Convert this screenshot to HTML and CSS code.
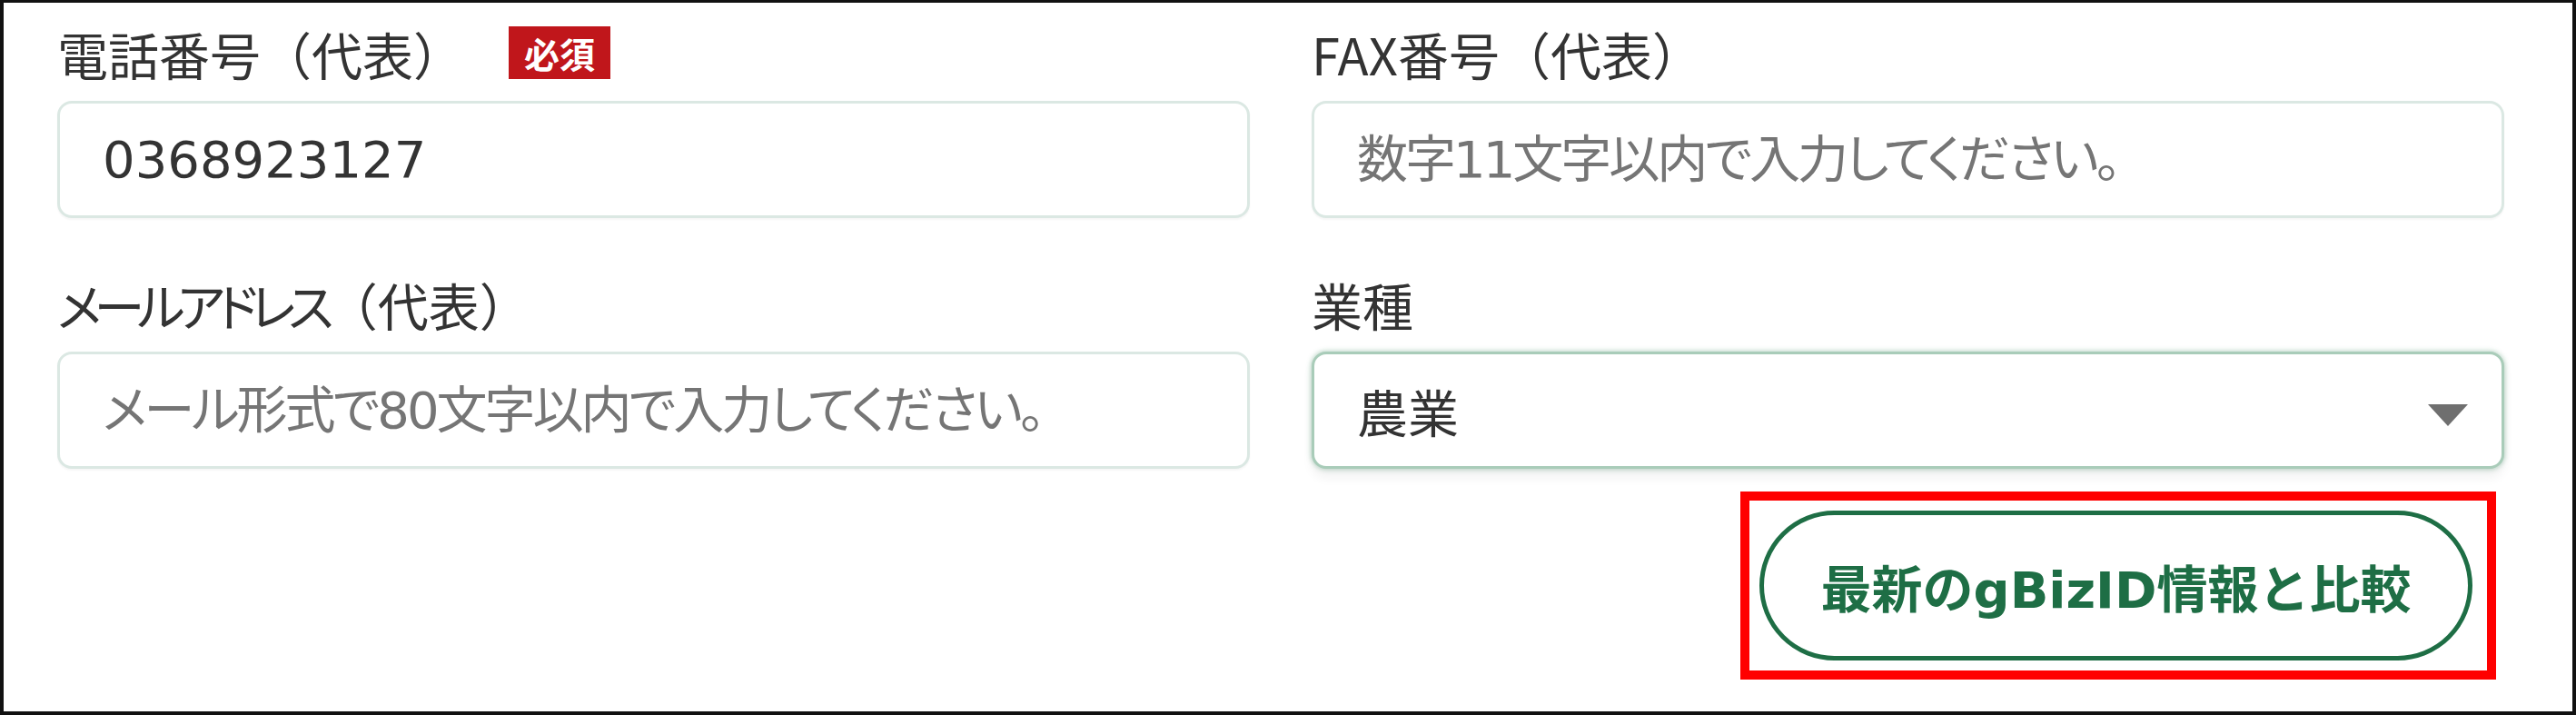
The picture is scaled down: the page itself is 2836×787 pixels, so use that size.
FILE: index.html
```html
<!DOCTYPE html>
<html lang="ja">
<head>
<meta charset="utf-8">
<title>企業情報</title>
<link rel="stylesheet" href="styles.css">
</head>
<body>
<div class="frame">
  <div class="grid">
    <div class="field">
      <div class="label-row">
        <label class="label" for="tel">電話番号（代表）</label>
        <span class="badge">必須</span>
      </div>
      <input class="input" id="tel" type="text" value="0368923127">
    </div>
    <div class="field">
      <div class="label-row">
        <label class="label" for="fax">FAX番号（代表）</label>
      </div>
      <input class="input" id="fax" type="text" placeholder="数字11文字以内で入力してください。">
    </div>
    <div class="field">
      <div class="label-row">
        <label class="label" for="mail"><span class="kana">メールアドレス</span>（代表）</label>
      </div>
      <input class="input" id="mail" type="text" placeholder="メール形式で80文字以内で入力してください。">
    </div>
    <div class="field">
      <div class="label-row">
        <label class="label" for="industry">業種</label>
      </div>
      <div class="select-wrap">
        <select class="select" id="industry">
          <option>農業</option>
        </select>
        <svg class="select-arrow" width="44" height="24" viewBox="0 0 44 24" aria-hidden="true"><path d="M0 0 H44 L22 24 Z" fill="#6f6f6f"/></svg>
      </div>
    </div>
  </div>
  <div class="actions">
    <div class="highlight">
      <button class="btn" type="button">最新の<span class="latin">gBizID</span>情報と比較</button>
    </div>
  </div>
</div>
</body>
</html>
```
FILE: styles.css
```css
* { box-sizing: border-box; }
html, body { margin: 0; padding: 0; background: #fff; }
body {
  font-family: "Noto Sans CJK JP", sans-serif;
  color: #333;
}
.frame {
  width: 2836px;
  height: 787px;
  border: 4px solid #111;
  border-top-width: 3px;
  padding: 26px 75px 0 59px;
  background: #fff;
}
.grid {
  display: grid;
  grid-template-columns: 1313px 1313px;
  column-gap: 68px;
  row-gap: 65px;
}
.field {
  display: flex;
  flex-direction: column;
}
.label-row {
  display: flex;
  align-items: center;
  height: 60px;
  margin-bottom: 22px;
}
.label {
  font-size: 56px;
  line-height: 60px;
  color: #333;
}
.kana {
  font-feature-settings: "palt";
  letter-spacing: -8px;
}
.badge {
  margin-left: 49px;
  width: 112px;
  height: 58px;
  background: #c0161b;
  color: #fff;
  font-size: 39px;
  font-weight: 700;
  line-height: 58px;
  text-align: center;
  margin-top: -2px;
}
.input, .select {
  width: 100%;
  height: 129px;
  border: 3px solid #dbe8e3;
  border-radius: 16px;
  background: #fff;
  padding: 0 47px;
  font-family: "DejaVu Sans", "Noto Sans CJK JP", sans-serif;
  font-size: 56px;
  color: #333;
  outline: none;
  box-shadow: 0 2px 2px rgba(0, 0, 0, 0.04);
  font-feature-settings: "palt";
}
.input::placeholder {
  color: #757575;
  opacity: 1;
  letter-spacing: -3px;
}
.select-wrap {
  position: relative;
}
.select {
  appearance: none;
  -webkit-appearance: none;
  font-family: "Noto Sans CJK JP", sans-serif;
  border-color: #a9ccb9;
  box-shadow: 0 0 5px 1px rgba(70, 140, 100, 0.35), 0 10px 12px rgba(0, 0, 0, 0.05);
}
.select-arrow {
  position: absolute;
  right: 40px;
  top: 58px;
}
.actions {
  display: flex;
  justify-content: flex-end;
  margin-top: 25px;
  padding-right: 9px;
}
.highlight {
  border: 10px solid #ff0000;
  padding: 11px 16px 11px 11px;
}
.btn {
  width: 785px;
  height: 165px;
  border: 5px solid #1e6e45;
  border-radius: 83px;
  background: #fff;
  color: #1e6e45;
  font-family: "Noto Sans CJK JP", sans-serif;
  font-size: 56px;
  font-weight: 700;
  padding: 0;
  cursor: pointer;
}
.btn .latin {
  font-family: "DejaVu Sans", sans-serif;
  font-weight: 700;
}
```
